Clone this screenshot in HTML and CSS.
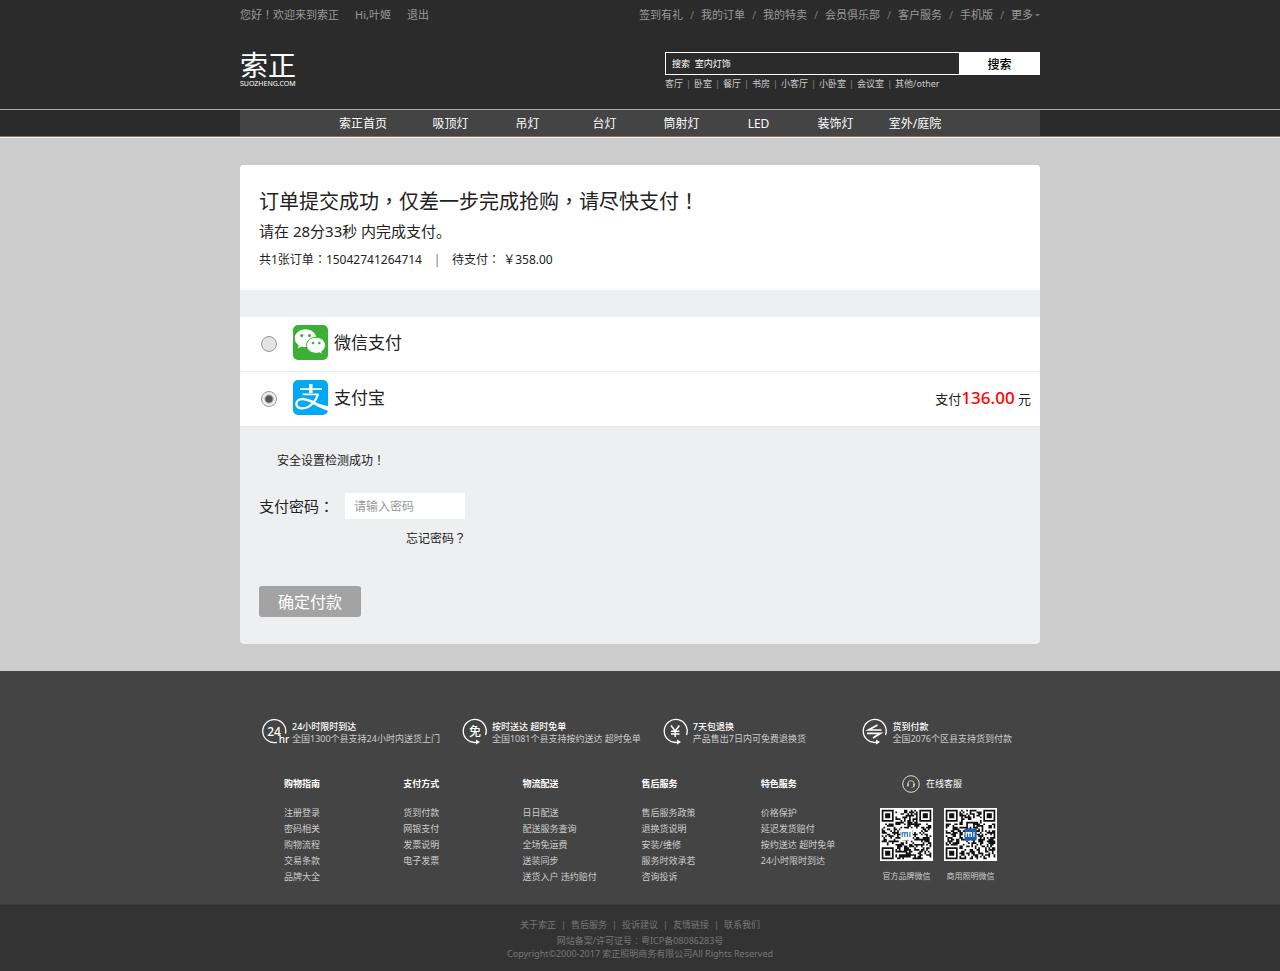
FILE: index.html
```html
<!DOCTYPE html>
<html lang="zh-CN">
<head>
    <meta charset="UTF-8">
    <meta name="viewport" content="width=device-width, initial-scale=1.0">
    <title>索正 - 订单支付</title>
    <link rel="stylesheet" href="styles.css">
</head>
<body>
    <header class="header">
        <div class="container topbar">
            <div class="welcome">
                <span>您好<span class="punct" lang="zh-TW">！</span>欢迎来到索正</span>
                <a href="#">Hi,叶姬</a>
                <a href="#">退出</a>
            </div>
            <div class="top-links">
                <a href="#">签到有礼</a><i>/</i>
                <a href="#">我的订单</a><i>/</i>
                <a href="#">我的特卖</a><i>/</i>
                <a href="#">会员俱乐部</a><i>/</i>
                <a href="#">客户服务</a><i>/</i>
                <a href="#">手机版</a><i>/</i>
                <a href="#" class="more">更多<svg width="5" height="3" viewBox="0 0 5 3"><path d="M0 0h5L2.500 2.500z" fill="#777"/></svg></a>
            </div>
        </div>
        <div class="container brand-row">
            <a href="#" class="logo">
                <span class="logo-name">索正</span>
                <span class="logo-url">SUOZHENG.COM</span>
            </a>
            <div class="search">
                <form class="search-form">
                    <input type="text" class="search-input" aria-label="搜索" value="搜索  室内灯饰">
                    <button type="button" class="search-btn">搜索</button>
                </form>
                <div class="keywords">
                    <a href="#">客厅</a><i>|</i>
                    <a href="#">卧室</a><i>|</i>
                    <a href="#">餐厅</a><i>|</i>
                    <a href="#">书房</a><i>|</i>
                    <a href="#">小客厅</a><i>|</i>
                    <a href="#">小卧室</a><i>|</i>
                    <a href="#">会议室</a><i>|</i>
                    <a href="#">其他/other</a>
                </div>
            </div>
        </div>
        <div class="nav-bar">
            <nav class="container nav">
                <a href="#">索正首页</a>
                <a href="#">吸顶灯</a>
                <a href="#">吊灯</a>
                <a href="#">台灯</a>
                <a href="#">筒射灯</a>
                <a href="#">LED</a>
                <a href="#">装饰灯</a>
                <a href="#">室外/庭院</a>
            </nav>
        </div>
    </header>

    <main class="main">
        <div class="container card">
            <section class="order">
                <h1>订单提交成功<span class="punct" lang="zh-TW">，</span>仅差一步完成抢购<span class="punct" lang="zh-TW">，</span>请尽快支付<span class="punct" lang="zh-TW">！</span></h1>
                <p class="countdown">请在 28分33秒 内完成支付。</p>
                <p class="order-info">共1张订单<span class="punct" lang="zh-TW">：</span>15042741264714<i>|</i>待支付<span class="punct" lang="zh-TW">：</span> ￥358.00</p>
            </section>

            <form>
                <div class="methods">
                    <div class="method">
                        <input type="radio" name="pay" id="wechat">
                        <label for="wechat">
                            <svg width="35" height="35" viewBox="0 0 35 35">
                                <rect width="35" height="35" rx="5" fill="#3cb034"/>
                                <path d="M12.500 4.300C6.500 4.300 1.700 8.300 1.700 13.300c0 2.900 1.600 5.300 4 6.900l-1 3.300 3.900-2c1.200.4 2.500.6 3.900.6 6 0 10.800-3.900 10.800-8.800s-4.800-9-10.800-9z" fill="#fff"/>
                                <path d="M23 12.300c-5.300 0-9.500 3.600-9.500 8s4.200 8 9.500 8c1.200 0 2.300-.2 3.300-.5l3.200 1.800-.9-2.900c2.400-1.500 3.900-3.800 3.900-6.400 0-4.400-4.200-8-9.500-8z" fill="#fff" stroke="#3cb034"/>
                                <g fill="#3cb034">
                                    <circle cx="8.800" cy="10.500" r="1.500"/>
                                    <circle cx="16.500" cy="10.500" r="1.500"/>
                                    <circle cx="20" cy="18" r="1.300"/>
                                    <circle cx="26.300" cy="18" r="1.300"/>
                                </g>
                            </svg>
                            微信支付
                        </label>
                    </div>
                    <div class="method">
                        <input type="radio" name="pay" id="alipay" checked>
                        <label for="alipay">
                            <svg width="35" height="35" viewBox="0 0 35 35">
                                <rect width="35" height="35" rx="5" fill="#00a8f5"/>
                                <g fill="none" stroke="#fff">
                                    <path d="M17.800 4v9" stroke-width="3.500"/>
                                    <path d="M7 9.200h22M9.500 14.300h16" stroke-width="1.800"/>
                                    <path d="M25 14.300c-2 6.500-8 14-15.500 14-4 0-6.200-2-6.200-4.600 0-2.800 2.700-4.700 6.200-4.700 4.500 0 8 2 13.500 4.600" stroke-width="2.300"/>
                                </g>
                                <path d="M20 21.300c5 2.600 10 4 15 4.900v4.600c-5-1.200-10.500-4-16-7.200z" fill="#fff"/>
                            </svg>
                            支付宝
                        </label>
                        <p class="amount">支付<strong>136.00</strong> 元</p>
                    </div>
                </div>

                <div class="pay-form">
                    <p class="safe-tip">安全设置检测成功<span class="punct" lang="zh-TW">！</span></p>
                    <div class="field">
                        <label for="password">支付密码<span class="punct" lang="zh-TW">：</span></label>
                        <div class="field-box">
                            <input type="password" id="password" placeholder="请输入密码">
                            <a href="#">忘记密码<span class="punct" lang="zh-TW">？</span></a>
                        </div>
                    </div>
                    <button type="button" class="pay-btn">确定付款</button>
                </div>
            </form>
        </div>
    </main>

    <footer class="footer">
        <div class="container features">
            <div class="feature">
                <svg width="26" height="26" viewBox="0 0 26 26">
                    <path d="M23.500 14.500A11.500 11.500 0 1 0 15 23.300" class="ring"/>
                    <rect x="17" y="17" width="11" height="8" fill="#444"/>
                    <text x="12" y="17" font-size="12" class="mark">24</text>
                    <text x="22" y="24" font-size="10" class="mark">hr</text>
                </svg>
                <p><b>24小时限时到达</b>全国1300个县支持24小时内送货上门</p>
            </div>
            <div class="feature">
                <svg width="26" height="26" viewBox="0 0 26 26">
                    <path d="M23.500 16A11.500 11.500 0 1 0 14 23.400" class="ring"/>
                    <path d="M14 20.500l4 2.500-4 2.500z" fill="#fff"/>
                    <text x="13" y="17" font-size="12" class="mark">免</text>
                </svg>
                <p><b>按时送达 超时免单</b>全国1081个县支持按约送达 超时免单</p>
            </div>
            <div class="feature">
                <svg width="26" height="26" viewBox="0 0 26 26">
                    <path d="M23.500 16A11.500 11.500 0 1 0 14 23.400" class="ring"/>
                    <path d="M14 20.500l4 2.500-4 2.500z" fill="#fff"/>
                    <path d="M8 6.500l4.200 5.500 4.200-5.500M12.200 12v6M8 12.300h8.400M8 15h8.400" fill="none" stroke="#fff" stroke-width="1.500"/>
                </svg>
                <p><b>7天包退换</b>产品售出7日内可免费退换货</p>
            </div>
            <div class="feature">
                <svg width="26" height="26" viewBox="0 0 26 26">
                    <path d="M23.500 16A11.500 11.500 0 1 0 14 23.400" class="ring"/>
                    <path d="M14 20.500l4 2.500-4 2.500z" fill="#fff"/>
                    <path d="M19.500 11H6.500L15.500 6M5 14.300h13.500L11 19" fill="none" stroke="#fff" stroke-width="1.700"/>
                </svg>
                <p><b>货到付款</b>全国2076个区县支持货到付款</p>
            </div>
        </div>

        <div class="container services">
            <div class="service">
                <h2>购物指南</h2>
                <a href="#">注册登录</a>
                <a href="#">密码相关</a>
                <a href="#">购物流程</a>
                <a href="#">交易条款</a>
                <a href="#">品牌大全</a>
            </div>
            <div class="service">
                <h2>支付方式</h2>
                <a href="#">货到付款</a>
                <a href="#">网银支付</a>
                <a href="#">发票说明</a>
                <a href="#">电子发票</a>
            </div>
            <div class="service">
                <h2>物流配送</h2>
                <a href="#">日日配送</a>
                <a href="#">配送服务查询</a>
                <a href="#">全场免运费</a>
                <a href="#">送装同步</a>
                <a href="#">送货入户 违约赔付</a>
            </div>
            <div class="service">
                <h2>售后服务</h2>
                <a href="#">售后服务政策</a>
                <a href="#">退换货说明</a>
                <a href="#">安装/维修</a>
                <a href="#">服务时效承若</a>
                <a href="#">咨询投诉</a>
            </div>
            <div class="service">
                <h2>特色服务</h2>
                <a href="#">价格保护</a>
                <a href="#">延迟发货赔付</a>
                <a href="#">按约送达 超时免单</a>
                <a href="#">24小时限时到达</a>
            </div>
            <div class="contact">
                <a href="#" class="online">
                    <svg width="18" height="18" viewBox="0 0 18 18" fill="none" stroke="#ddd">
                        <circle cx="9" cy="9" r="8.300"/>
                        <path d="M5.800 9.500V8.800a3.200 3.200 0 0 1 6.400 0v.7M12 11c-.3 1-1.200 1.500-2.500 1.500" stroke-width=".8"/>
                        <path d="M6 8.500v3M12 8.500v3" stroke-width="1.500"/>
                    </svg>
                    在线客服
                </a>
                <div class="codes">
                    <figure>
                        <svg class="qr" data-seed="7" viewBox="-1 -1 31 31"></svg>
                        <figcaption>官方品牌微信</figcaption>
                    </figure>
                    <figure>
                        <svg class="qr qr-blue" data-seed="23" viewBox="-1 -1 31 31"></svg>
                        <figcaption>商用照明微信</figcaption>
                    </figure>
                </div>
            </div>
        </div>

        <div class="copyright">
            <div class="about">
                <a href="#">关于索正</a><i>|</i>
                <a href="#">售后服务</a><i>|</i>
                <a href="#">投诉建议</a><i>|</i>
                <a href="#">友情链接</a><i>|</i>
                <a href="#">联系我们</a>
            </div>
            <p class="license">网站备案/许可证号<span class="punct" lang="zh-TW">：</span>粤ICP备08086283号</p>
            <p>Copyright©2000-2017 索正照明商务有限公司All Rights Reserved</p>
        </div>
    </footer>

    <script src="qr.js"></script>
</body>
</html>
```

FILE: styles.css
```css
* {
    box-sizing: border-box;
}
body {
    margin: 0;
    font-family: "Noto Sans", "Noto Sans CJK SC", sans-serif;
    font-size: 12px;
    color: #222;
    background-color: #333;
}
h1, h2, p, figure {
    margin: 0;
    font-weight: normal;
}
a {
    color: inherit;
    text-decoration: none;
}
a:hover {
    text-decoration: underline;
}
i {
    font-style: normal;
    text-align: center;
}
input, button {
    font-family: inherit;
}
/* centred full-width punctuation */
.punct {
    font-family: "Noto Sans CJK TC", sans-serif;
    line-height: 1;
}
.container {
    width: 100%;
    max-width: 800px;
    margin: 0 auto;
}

/* header */
.header {
    background-color: #2b2b2b;
}
.topbar {
    display: flex;
    justify-content: space-between;
    font-size: 11px;
    line-height: 30px;
    color: #999;
}
.welcome {
    display: flex;
    gap: 16px;
}
.top-links {
    display: flex;
}
.top-links i {
    width: 18px;
    color: #777;
}
.more {
    display: flex;
    align-items: center;
    gap: 2px;
}
.brand-row {
    display: flex;
    justify-content: space-between;
    padding: 22px 0 17px;
}
.logo {
    display: flex;
    flex-direction: column;
    gap: 2px;
    color: #fff;
}
.logo-name {
    font-size: 28px;
    line-height: 26px;
}
.logo-url {
    font-size: 7px;
    line-height: 8px;
}
.search {
    width: 375px;
}
.search-form {
    display: flex;
}
.search-input {
    flex: 1;
    min-width: 0;
    height: 23px;
    padding: 0 6px;
    border: 1px solid #fff;
    border-right: 0;
    background-color: #2b2b2b;
    font-size: 9px;
    color: #fff;
}
.search-btn {
    width: 81px;
    padding: 0;
    border: 0;
    background-color: #fff;
    font-size: 12px;
    font-weight: 500;
    color: #000;
    cursor: pointer;
}
.keywords {
    display: flex;
    font-size: 9px;
    line-height: 17px;
    color: #ccc;
}
.keywords i {
    width: 11px;
    color: #888;
}
.nav-bar {
    border-top: 1px solid #aaa;
    border-bottom: 1px solid #8a7350;
}
.nav {
    display: flex;
    padding: 2px 0 0 74px;
    background-color: #444;
    font-size: 12px;
    line-height: 24px;
    color: #fff;
}
.nav a {
    width: 77px;
    text-align: center;
}
.nav a:first-child {
    width: 98px;
}
.nav a:last-child {
    width: 82px;
}

/* payment card */
.main {
    padding: 27px 0;
    border-top: 1px solid #eee;
    background-color: #ccc;
}
.card {
    border-radius: 4px;
    overflow: hidden;
    background-color: #eeeff1;
}
.order {
    padding: 21px 19px 14px;
    background-color: #fff;
}
.order h1 {
    font-size: 20px;
    line-height: 32px;
}
.countdown {
    font-size: 15px;
    line-height: 26px;
}
.order-info {
    line-height: 32px;
}
.order-info i {
    display: inline-block;
    width: 30px;
    color: #777;
}
.methods {
    margin-top: 27px;
}
.method {
    display: flex;
    align-items: center;
    height: 55px;
    padding: 0 9px 0 21px;
    border-bottom: 1px solid #e8e9eb;
    border-radius: 2px;
    background-color: #fff;
}
.method input {
    appearance: none;
    width: 16px;
    height: 16px;
    margin: 0 16px 0 0;
    border: 1px solid #999;
    border-radius: 50%;
    background-color: #e4e4e4;
}
.method input:checked {
    background: radial-gradient(circle, #555 3px, #eee 5px);
}
.method label {
    display: flex;
    align-items: center;
    gap: 6px;
    padding-bottom: 3px;
    font-size: 17px;
    line-height: 32px;
}
.amount {
    margin-left: auto;
    padding-bottom: 3px;
    font-size: 13px;
}
.amount strong {
    font-size: 17px;
    font-weight: 500;
    color: #f00;
}
.pay-form {
    padding: 21px 19px 27px;
}
.safe-tip {
    padding-left: 18px;
    line-height: 26px;
}
.field {
    display: flex;
    margin-top: 19px;
}
.field label {
    width: 86px;
    font-size: 15px;
    line-height: 26px;
}
.field-box {
    display: flex;
    flex-direction: column;
    gap: 10px;
    width: 121px;
    text-align: right;
    line-height: 20px;
}
.field-box input {
    width: 120px;
    height: 26px;
    padding: 0 9px;
    border: 0;
    background-color: #fff;
    font-size: 12px;
}
.field-box input::placeholder {
    color: #999;
}
.pay-btn {
    display: block;
    height: 31px;
    margin-top: 37px;
    padding: 0 19px 2px;
    border: 0;
    border-radius: 3px;
    background-color: #a3a3a3;
    font-size: 16px;
    color: #fff;
    cursor: pointer;
}

/* footer */
.footer {
    background-color: #444;
    font-size: 9px;
    color: #ccc;
}
.features {
    display: grid;
    grid-template-columns: repeat(4, 1fr);
    padding-top: 48px;
}
.feature {
    display: flex;
    gap: 4px;
    padding-left: 22px;
    line-height: 12px;
    white-space: nowrap;
}
.feature svg {
    flex: none;
    overflow: visible;
}
.feature p {
    padding-top: 2px;
}
.feature b {
    display: block;
    font-weight: 500;
    color: #fff;
}
.ring {
    fill: none;
    stroke: #fff;
    stroke-width: 1.3;
}
.mark {
    fill: #fff;
    font-weight: 500;
    text-anchor: middle;
}
.services {
    display: flex;
    padding: 31px 43px 19px 44px;
    line-height: 16px;
}
.service {
    flex: 1;
    white-space: nowrap;
}
.service h2 {
    margin-bottom: 13px;
    font-size: 9px;
    font-weight: bold;
    color: #fff;
}
.service a {
    display: block;
}
.contact {
    width: 117px;
}
.online {
    display: flex;
    align-items: center;
    gap: 6px;
    height: 16px;
    padding-left: 22px;
    color: #fff;
}
.codes {
    display: flex;
    justify-content: space-between;
    margin-top: 16px;
    text-align: center;
    font-size: 8px;
}
.qr {
    display: block;
    width: 53px;
    height: 53px;
    margin-bottom: 7px;
    background-color: #fff;
}
.copyright {
    padding: 12px 0;
    border-top: 1px solid #3c3c3c;
    background-color: #333;
    text-align: center;
    line-height: 13px;
    color: #777;
}
.about {
    display: flex;
    justify-content: center;
    line-height: 16px;
}
.about i {
    width: 15px;
}
.license {
    padding-top: 1px;
}
```

FILE: qr.js
```js
const SIZE = 29;

// finder squares in three corners, null elsewhere
function finder(x, y) {
    const corners = [[0, 0], [SIZE - 7, 0], [0, SIZE - 7]];
    for (const [cx, cy] of corners) {
        const d = Math.max(Math.abs(x - cx - 3), Math.abs(y - cy - 3));
        if (d <= 4) return d === 3 || d <= 1;
    }
    return null;
}

function drawCode(svg) {
    let seed = Number(svg.dataset.seed);
    let d = '';
    for (let y = 0; y < SIZE; y++) {
        for (let x = 0; x < SIZE; x++) {
            seed = (seed * 16807) % 2147483647;
            const corner = finder(x, y);
            const dark = corner === null ? seed / 2147483647 < 0.52 : corner;
            if (dark) d += `M${x} ${y}h1v1h-1z`;
        }
    }
    const blue = svg.classList.contains('qr-blue');
    svg.innerHTML = `<path d="${d}" fill="#111"/>
        <rect x="11" y="11" width="7" height="7" fill="${blue ? '#1d5fae' : '#fff'}"/>
        <path d="M12 13v3M13.500 13v3M15 13v3M16.500 13v3M12 13.500h3" stroke="${blue ? '#fff' : '#3a7fb5'}" stroke-width=".7"/>`;
}

document.querySelectorAll('.qr').forEach(drawCode);
```
